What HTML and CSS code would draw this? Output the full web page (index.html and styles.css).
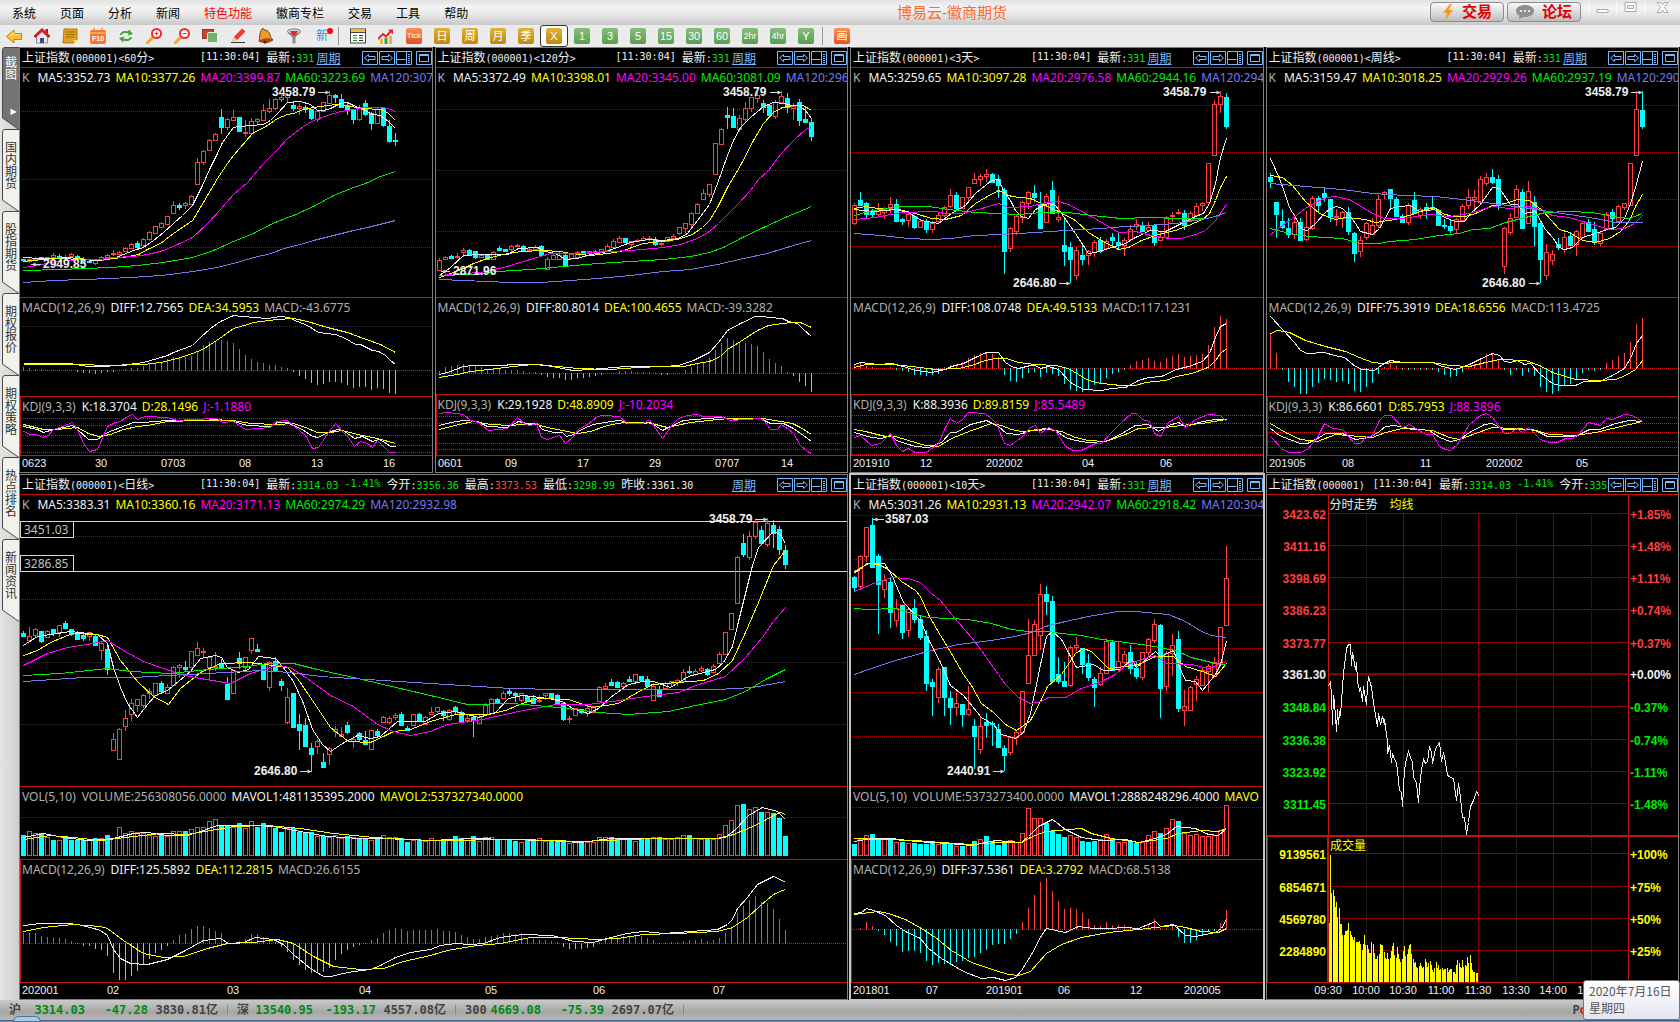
FILE: index.html
```html
<!DOCTYPE html>
<html lang="zh-CN">
<head>
<meta charset="utf-8">
<title>博易云-徽商期货</title>
<link rel="stylesheet" href="styles.css">
</head>
<body>
<svg class="sprite" aria-hidden="true">
  <symbol id="i-prev" viewBox="0 0 16 14"><path d="M.5 .5h15v13H.5z"/><path d="M2.500 7l4-3.500v2h6.500v3H6.500v2z"/></symbol>
  <symbol id="i-next" viewBox="0 0 16 14"><path d="M.5 .5h15v13H.5z"/><path d="M13.500 7l-4-3.500v2H3v3h6.500v2z"/></symbol>
  <symbol id="i-split" viewBox="0 0 16 14"><path d="M.5 .5h15v13H.5zM.5 8.500h9M10.500 1v12"/><path d="M12 3.500h3M12 5.500h3M12 7.500h3M12 9.500h3M12 11.500h3" stroke-dasharray="2 1"/></symbol>
  <symbol id="i-full" viewBox="0 0 16 14"><path d="M.5 .5h15v13H.5zM3.500 3.500h9v7h-9zM3.500 4.500h9"/></symbol>
  <symbol id="i-tab" viewBox="0 0 17 83"><path d="M17 .5H3Q.5 .5 .5 3V71L17 82.500" stroke="#4a4a4a"/></symbol>
</svg>

<header class="menubar">
  <nav class="menu">
    <button>系统</button><button>页面</button><button>分析</button><button>新闻</button><button class="hot">特色功能</button><button>徽商专栏</button><button>交易</button><button>工具</button><button>帮助</button>
  </nav>
  <h1 class="app-title">博易云-徽商期货</h1>
  <div class="menubar-end">
    <button class="cta"><svg width="12" height="16" viewBox="0 0 12 16"><path d="M8 0L1 9h4L3 16 11 6H6.500L10 0z" fill="#f59a1c"/></svg>交易</button>
    <button class="cta"><svg width="18" height="14" viewBox="0 0 18 14"><path d="M9 0c5 0 9 2.500 9 6s-4 6-9 6l-2 0-4 2 .5-3C1.500 10 0 8 0 6c0-3.500 4-6 9-6z" fill="#8f8f8f"/><g fill="#fff"><circle cx="5" cy="6" r="1"/><circle cx="9" cy="6" r="1"/><circle cx="13" cy="6" r="1"/></g></svg>论坛</button>
    <div class="win">
      <button aria-label="最小化"><svg width="13" height="12"><path d="M1 7.500h11v3H1z" fill="#fff" stroke="#aaa"/></svg></button>
      <button aria-label="最大化"><svg width="13" height="12"><path d="M1 .5h11v9H1z" fill="#fff" stroke="#aaa"/><path d="M3.500 3.500h6v3h-6z" fill="#eee" stroke="#aaa"/></svg></button>
      <button aria-label="关闭"><svg width="13" height="12"><path d="M1 .5h4l1.500 2.500L8 .5h4L8.500 5.500 12 10.500H8L6.500 8 5 10.500H1l3.500-5z" fill="#fff" stroke="#aaa"/></svg></button>
    </div>
  </div>
</header>

<div class="toolbar" role="toolbar">
  <button aria-label="后退"><svg class="ico" viewBox="0 0 16 16"><path d="M.5 8.500L8 2v3.500h7.500v6H8V15z" fill="#fbc02a" stroke="#b98200"/><path d="M3 8.300L7.300 4.500v2H14" fill="none" stroke="#ffe795"/></svg></button>
  <button aria-label="首页"><svg class="ico" viewBox="0 0 16 16"><path d="M2.500 8v7h11V8L8 3z" fill="#e8e8ee" stroke="#8a8f9c"/><path d="M11.500 1h2.500v5l-2.500-2.500z" fill="#a02020"/><path d="M8 .5L0 8l1.500 1.500L8 3.500l6.500 6L16 8z" fill="#cf1f2a" stroke="#cf1f2a"/><path d="M6 10h4v5H6z" fill="#35507c"/></svg></button>
  <button aria-label="记事"><svg class="ico" viewBox="0 0 16 16"><path d="M2 1h13v11l-3 3H1z" fill="#e0a020" stroke="#b47a08"/><path d="M4 4h9M4 6.500h9M4 9h8" stroke="#9c6a00"/><path d="M12 15v-3h3z" fill="#ffe9a0"/></svg></button>
  <button aria-label="F10"><svg class="ico" viewBox="0 0 16 16"><path d="M4 0v3M12 0v3" stroke="#c87828"/><rect y="2" width="16" height="14" rx="2" fill="#f6772c"/><path d="M0 5h16" stroke="#ffd38a"/><text x="8" y="13" class="ico-text">F10</text></svg></button>
  <button aria-label="刷新"><svg class="ico" viewBox="0 0 16 16"><path d="M2 7c0-3 4-5 8-3.500l1-2L15 6l-5 1.500.5-2C7 4.500 4.500 5 3.500 7z" fill="#3fa53a"/><path d="M14 9c0 3-4 5-8 3.500l-1 2L1 10l5-1.500-.5 2c3.500 1 6 .5 7-1.500z" fill="#3fa53a"/></svg></button>
  <button aria-label="放大"><svg class="ico" viewBox="0 0 16 16"><path d="M1 15l5-5" stroke="#f4a82a" stroke-width="3" stroke-linecap="round"/><circle cx="10.500" cy="5.500" r="4.500" fill="#fff" stroke="#ee2b2b" stroke-width="2"/><path d="M8.500 5.500h4M10.500 3.500v4" stroke="#ee2b2b"/></svg></button>
  <button aria-label="缩小"><svg class="ico" viewBox="0 0 16 16"><path d="M1 15l5-5" stroke="#f4a82a" stroke-width="3" stroke-linecap="round"/><circle cx="10.500" cy="5.500" r="4.500" fill="#fff" stroke="#ee2b2b" stroke-width="2"/><path d="M8.500 5.500h4" stroke="#ee2b2b"/></svg></button>
  <button aria-label="叠加"><svg class="ico" viewBox="0 0 16 16"><rect x=".5" y="1.500" width="11" height="9" fill="#c9423c" stroke="#96302c"/><rect x="5.500" y="4.500" width="10" height="10" rx="1" fill="#74b36c" stroke="#e8f2e6"/></svg></button>
  <button aria-label="画线"><svg class="ico" viewBox="0 0 16 16"><path d="M1 14.500h14" stroke="#333"/><path d="M2.500 13L4 9l8-8.500 3.500 3L7 12z" fill="#ea3a2c"/><path d="M2.500 13L4 9l3 3z" fill="#ffc9a8"/></svg></button>
  <button aria-label="预警"><svg class="ico" viewBox="0 0 16 16"><path d="M4 1c1-1.500 2 0 2 1 5 0 6 4 6.500 7L15 12 1 13.500C2 10 1 5 4 1z" fill="#ec9a28" stroke="#7a3a10"/><path d="M1 13c3-3 10-4 14-1-2 3-10 5-14 1z" fill="#a84a18"/><circle cx="7" cy="14" r="1.500" fill="#5a2508"/></svg></button>
  <button aria-label="选股"><svg class="ico" viewBox="0 0 16 16"><path d="M1.500 3c0 3 4 4 5 7v5.500h3V10c1-3 5-4 5-7z" fill="#8a8a90"/><ellipse cx="8" cy="3.500" rx="6.500" ry="2.500" fill="#d8d8dc" stroke="#777"/><path d="M4.500 3.500h7L8 8z" fill="#e8252c" stroke="#e8252c"/></svg></button>
  <button class="new">新</button>
  <i class="sep"></i>
  <button aria-label="报价"><svg class="ico" viewBox="0 0 16 16"><rect x=".5" y="1" width="15" height="14" fill="#fff" stroke="#444"/><path d="M1 1.500h14v3H1z" fill="#f5c231"/><path d="M1 4.500h14" stroke="#444"/><path d="M3 7.500h4M3 10h4M3 12.500h4" stroke="#208a2a"/><path d="M9 7.500h4M9 10h4M9 12.500h4" stroke="#333"/></svg></button>
  <button aria-label="走势"><svg class="ico" viewBox="0 0 16 16"><path d="M2 11h3v5H2zM11 8h3v8h-3z" fill="#f2b430"/><path d="M6.500 10h3v6h-3z" fill="#3fa53a"/><path d="M0 11l5-5 3 2.500L13 3" fill="none" stroke="#e8252c" stroke-width="2"/><path d="M10 1.500h5v5z" fill="#e8252c"/></svg></button>
  <button class="key tick"><span>Tick</span></button>
  <button class="key gold"><span>日</span></button>
  <button class="key gold"><span>周</span></button>
  <button class="key gold"><span>月</span></button>
  <button class="key gold"><span>季</span></button>
  <button class="key gold on" aria-pressed="true"><span>X</span></button>
  <button class="key green"><span>1</span></button>
  <button class="key green"><span>3</span></button>
  <button class="key green"><span>5</span></button>
  <button class="key green"><span>15</span></button>
  <button class="key green"><span>30</span></button>
  <button class="key green"><span>60</span></button>
  <button class="key green small"><span>2hr</span></button>
  <button class="key green small"><span>4hr</span></button>
  <button class="key green"><span>Y</span></button>
  <i class="sep"></i>
  <button class="key tick"><span>画</span></button>
</div>

<div class="workspace">
  <nav class="tabs">
    <button class="on"><svg><use href="#i-tab"/></svg><span>截图</span><i>▶</i></button>
    <button><svg><use href="#i-tab"/></svg><span>国内期货</span></button>
    <button><svg><use href="#i-tab"/></svg><span>股指期货</span></button>
    <button><svg><use href="#i-tab"/></svg><span>期权报价</span></button>
    <button><svg><use href="#i-tab"/></svg><span>期权策略</span></button>
    <button><svg><use href="#i-tab"/></svg><span>热点排名</span></button>
    <button><svg><use href="#i-tab"/></svg><span>新闻资讯</span></button>
  </nav>

  <main class="board">
    <section class="panel three" id="m60">
      <header class="bar"><h2><b>上证指数</b>(000001)&lt;60<b>分</b>&gt;</h2>
        <p class="quotes"><span>[11:30:04]</span><span><b>最新</b>:<em class="dn">331</em></span></p>
        <a class="period" href="#m60">周期</a>
        <div class="tools"><button aria-label="前"><svg><use href="#i-prev"/></svg></button><button aria-label="后"><svg><use href="#i-next"/></svg></button><button aria-label="分割"><svg><use href="#i-split"/></svg></button><button aria-label="放大"><svg><use href="#i-full"/></svg></button></div></header>
      <div class="pane"><svg class="plot" role="img" aria-label="K线"></svg><p class="legend"><span class="g k">K</span><span>MA5:3352.73</span><span class="y">MA10:3377.26</span><span class="m">MA20:3399.87</span><span class="n">MA60:3223.69</span><span class="b">MA120:307</span></p></div>
      <div class="pane"><svg class="plot" role="img" aria-label="MACD"></svg><p class="legend"><span class="g">MACD(12,26,9)</span><span>DIFF:12.7565</span><span class="y">DEA:34.5953</span><span class="g">MACD:-43.6775</span></p></div>
      <div class="pane last"><svg class="plot" role="img" aria-label="KDJ"></svg><p class="legend"><span class="g">KDJ(9,3,3)</span><span>K:18.3704</span><span class="y">D:28.1496</span><span class="m">J:-1.1880</span></p></div>
      <svg class="axis"></svg>
    </section>

    <section class="panel three alt" id="m120">
      <header class="bar"><h2><b>上证指数</b>(000001)&lt;120<b>分</b>&gt;</h2>
        <p class="quotes"><span>[11:30:04]</span><span><b>最新</b>:<em class="dn">331</em></span></p>
        <a class="period" href="#m120">周期</a>
        <div class="tools"><button aria-label="前"><svg><use href="#i-prev"/></svg></button><button aria-label="后"><svg><use href="#i-next"/></svg></button><button aria-label="分割"><svg><use href="#i-split"/></svg></button><button aria-label="放大"><svg><use href="#i-full"/></svg></button></div></header>
      <div class="pane"><svg class="plot" role="img" aria-label="K线"></svg><p class="legend"><span class="g k">K</span><span>MA5:3372.49</span><span class="y">MA10:3398.01</span><span class="m">MA20:3345.00</span><span class="n">MA60:3081.09</span><span class="b">MA120:296</span></p></div>
      <div class="pane"><svg class="plot" role="img" aria-label="MACD"></svg><p class="legend"><span class="g">MACD(12,26,9)</span><span>DIFF:80.8014</span><span class="y">DEA:100.4655</span><span class="g">MACD:-39.3282</span></p></div>
      <div class="pane last"><svg class="plot" role="img" aria-label="KDJ"></svg><p class="legend"><span class="g">KDJ(9,3,3)</span><span>K:29.1928</span><span class="y">D:48.8909</span><span class="m">J:-10.2034</span></p></div>
      <svg class="axis"></svg>
    </section>

    <section class="panel three alt" id="d3">
      <header class="bar"><h2><b>上证指数</b>(000001)&lt;3<b>天</b>&gt;</h2>
        <p class="quotes"><span>[11:30:04]</span><span><b>最新</b>:<em class="dn">331</em></span></p>
        <a class="period" href="#d3">周期</a>
        <div class="tools"><button aria-label="前"><svg><use href="#i-prev"/></svg></button><button aria-label="后"><svg><use href="#i-next"/></svg></button><button aria-label="分割"><svg><use href="#i-split"/></svg></button><button aria-label="放大"><svg><use href="#i-full"/></svg></button></div></header>
      <div class="pane"><svg class="plot" role="img" aria-label="K线"></svg><p class="legend"><span class="g k">K</span><span>MA5:3259.65</span><span class="y">MA10:3097.28</span><span class="m">MA20:2976.58</span><span class="n">MA60:2944.16</span><span class="b">MA120:294</span></p></div>
      <div class="pane"><svg class="plot" role="img" aria-label="MACD"></svg><p class="legend"><span class="g">MACD(12,26,9)</span><span>DIFF:108.0748</span><span class="y">DEA:49.5133</span><span class="g">MACD:117.1231</span></p></div>
      <div class="pane last"><svg class="plot" role="img" aria-label="KDJ"></svg><p class="legend"><span class="g">KDJ(9,3,3)</span><span>K:88.3936</span><span class="y">D:89.8159</span><span class="m">J:85.5489</span></p></div>
      <svg class="axis"></svg>
    </section>

    <section class="panel three" id="week">
      <header class="bar"><h2><b>上证指数</b>(000001)&lt;<b>周线</b>&gt;</h2>
        <p class="quotes"><span>[11:30:04]</span><span><b>最新</b>:<em class="dn">331</em></span></p>
        <a class="period" href="#week">周期</a>
        <div class="tools"><button aria-label="前"><svg><use href="#i-prev"/></svg></button><button aria-label="后"><svg><use href="#i-next"/></svg></button><button aria-label="分割"><svg><use href="#i-split"/></svg></button><button aria-label="放大"><svg><use href="#i-full"/></svg></button></div></header>
      <div class="pane"><svg class="plot" role="img" aria-label="K线"></svg><p class="legend"><span class="g k">K</span><span>MA5:3159.47</span><span class="y">MA10:3018.25</span><span class="m">MA20:2929.26</span><span class="n">MA60:2937.19</span><span class="b">MA120:290</span></p></div>
      <div class="pane"><svg class="plot" role="img" aria-label="MACD"></svg><p class="legend"><span class="g">MACD(12,26,9)</span><span>DIFF:75.3919</span><span class="y">DEA:18.6556</span><span class="g">MACD:113.4725</span></p></div>
      <div class="pane last"><svg class="plot" role="img" aria-label="KDJ"></svg><p class="legend"><span class="g">KDJ(9,3,3)</span><span>K:86.6601</span><span class="y">D:85.7953</span><span class="m">J:88.3896</span></p></div>
      <svg class="axis"></svg>
    </section>

    <section class="panel vol wide" id="day">
      <header class="bar"><h2><b>上证指数</b>(000001)&lt;<b>日线</b>&gt;</h2>
        <p class="quotes"><span>[11:30:04]</span><span><b>最新</b>:<em class="dn">3314.03</em></span><span class="dn">-1.41%</span><span><b>今开</b>:<em class="dn">3356.36</em></span><span><b>最高</b>:<em class="up">3373.53</em></span><span><b>最低</b>:<em class="dn">3298.99</em></span><span><b>昨收</b>:3361.30</span></p>
        <a class="period" href="#day">周期</a>
        <div class="tools"><button aria-label="前"><svg><use href="#i-prev"/></svg></button><button aria-label="后"><svg><use href="#i-next"/></svg></button><button aria-label="分割"><svg><use href="#i-split"/></svg></button><button aria-label="放大"><svg><use href="#i-full"/></svg></button></div></header>
      <div class="pane"><svg class="plot" role="img" aria-label="K线"></svg><p class="legend"><span class="g k">K</span><span>MA5:3383.31</span><span class="y">MA10:3360.16</span><span class="m">MA20:3171.13</span><span class="n">MA60:2974.29</span><span class="b">MA120:2932.98</span></p></div>
      <div class="pane"><svg class="plot" role="img" aria-label="成交量"></svg><p class="legend"><span class="g">VOL(5,10)</span><span class="g">VOLUME:256308056.0000</span><span>MAVOL1:481135395.2000</span><span class="y">MAVOL2:537327340.0000</span></p></div>
      <div class="pane last"><svg class="plot" role="img" aria-label="MACD"></svg><p class="legend"><span class="g">MACD(12,26,9)</span><span>DIFF:125.5892</span><span class="y">DEA:112.2815</span><span class="g">MACD:26.6155</span></p></div>
      <svg class="axis"></svg>
    </section>

    <section class="panel vol active" id="d10">
      <header class="bar"><h2><b>上证指数</b>(000001)&lt;10<b>天</b>&gt;</h2>
        <p class="quotes"><span>[11:30:04]</span><span><b>最新</b>:<em class="dn">331</em></span></p>
        <a class="period" href="#d10">周期</a>
        <div class="tools"><button aria-label="前"><svg><use href="#i-prev"/></svg></button><button aria-label="后"><svg><use href="#i-next"/></svg></button><button aria-label="分割"><svg><use href="#i-split"/></svg></button><button aria-label="放大"><svg><use href="#i-full"/></svg></button></div></header>
      <div class="pane"><svg class="plot" role="img" aria-label="K线"></svg><p class="legend"><span class="g k">K</span><span>MA5:3031.26</span><span class="y">MA10:2931.13</span><span class="m">MA20:2942.07</span><span class="n">MA60:2918.42</span><span class="b">MA120:304</span></p></div>
      <div class="pane"><svg class="plot" role="img" aria-label="成交量"></svg><p class="legend"><span class="g">VOL(5,10)</span><span class="g">VOLUME:5373273400.0000</span><span>MAVOL1:2888248296.4000</span><span class="y">MAVO</span></p></div>
      <div class="pane last"><svg class="plot" role="img" aria-label="MACD"></svg><p class="legend"><span class="g">MACD(12,26,9)</span><span>DIFF:37.5361</span><span class="y">DEA:3.2792</span><span class="g">MACD:68.5138</span></p></div>
      <svg class="axis"></svg>
    </section>

    <section class="panel intraday" id="today">
      <header class="bar"><h2><b>上证指数</b>(000001)</h2>
        <p class="quotes"><span>[11:30:04]</span><span><b>最新</b>:<em class="dn">3314.03</em></span><span class="dn">-1.41%</span><span><b>今开</b>:<em class="dn">335</em></span></p>
        <div class="tools"><button aria-label="前"><svg><use href="#i-prev"/></svg></button><button aria-label="后"><svg><use href="#i-next"/></svg></button><button aria-label="分割"><svg><use href="#i-split"/></svg></button><button aria-label="放大"><svg><use href="#i-full"/></svg></button></div></header>
      <div class="pane"><svg class="plot" role="img" aria-label="分时走势"></svg><p class="legend"><span>分时走势</span><span class="y">均线</span></p></div>
      <svg class="axis"></svg>
    </section>
  </main>
</div>

<footer class="status">
  <div class="index"><span><b>沪</b><b class="dn">3314.03</b></span><b class="dn">-47.28</b><b>3830.81亿</b></div>
  <div class="index"><span><b>深</b><b class="dn">13540.95</b></span><b class="dn">-193.17</b><b>4557.08亿</b></div>
  <div class="index"><span><b>300</b><b class="dn">4669.08</b></span><b class="dn">-75.39</b><b>2697.07亿</b></div>
  <b class="brand">P<em>o</em></b>
</footer>
<div class="taskbar"><span class="orb"></span></div>
<div class="datetip" role="tooltip">2020年7月16日<br>星期四</div>
<script src="charts.js"></script>
</body>
</html>
```
FILE: styles.css
```css
* { box-sizing: border-box; }
body {
  margin: 0;
  height: 100vh;
  display: flex;
  flex-direction: column;
  overflow: hidden;
  background: #ebebeb;
  color: #000;
  font: 12px/16px "Liberation Sans", "Noto Sans CJK SC", sans-serif;
}
button { padding: 0; border: 0; background: none; color: inherit; font: inherit; }
h1, h2, p { margin: 0; font: inherit; }
em { font-style: normal; }
.sprite { position: absolute; width: 0; height: 0; }

/* menu bar */
.menubar {
  flex: none;
  height: 25px;
  display: grid;
  grid-template-columns: 1fr auto 1fr;
  align-items: center;
  background: linear-gradient(#e2e2e2, #f4f4f4 30%, #e6e6e6 60%, #c8c8c8);
}
.menu { display: flex; gap: 24px; padding: 2px 0 0 12px; }
.hot { color: #f00; }
.app-title { color: #ff6a2a; font-size: 15px; padding-left: 224px; }
.menubar-end { display: flex; justify-content: flex-end; align-items: flex-start; gap: 3px; height: 25px; padding-top: 2px; }
.cta {
  display: flex; align-items: center; justify-content: center; gap: 8px;
  width: 74px; height: 20px;
  border: 1px solid #8c8c8c; border-radius: 4px;
  background: linear-gradient(#fafafa, #dcdcdc 50%, #bdbdbd);
  color: #e00000; font-size: 15px; line-height: 18px; font-weight: bold;
}
.win { display: flex; margin-left: 4px; }
.win button { width: 28px; height: 12px; border-left: 1px solid #fff; display: flex; justify-content: center; }
.win button:last-child { width: 36px; }

/* toolbar */
.toolbar { flex: none; height: 22px; display: flex; align-items: center; background: #ebebeb; }
.toolbar button { width: 28px; height: 22px; display: flex; align-items: center; justify-content: center; }
.ico { width: 16px; height: 16px; }
.ico-text { font: bold 7px "Liberation Sans", sans-serif; fill: #fff; text-anchor: middle; }
.sep { width: 8px; height: 18px; border-left: 1px solid #999; margin-left: 2px; margin-right: -2px; }
.toolbar .new { position: relative; color: #2f8ee8; }
.new::after { content: ""; position: absolute; right: 3px; top: 3px; width: 6px; height: 6px; border-radius: 3px; background: #f00; }
.key span {
  width: 16px; height: 16px; border-radius: 2px;
  color: #fff; font-size: 11px; line-height: 16px; text-align: center;
}
.gold span { background: linear-gradient(#e0b23c, #c08808); }
.green span { background: linear-gradient(#86bf7c, #5a9c50); }
.tick span { background: linear-gradient(#f5925c, #e2501c); font-size: 8px; }
.key.tick:last-child span { font-size: 11px; }
.key.small span { font-size: 9px; }
.toolbar .on { background: #fff; border: 1px solid #333; border-radius: 3px; }

/* side tabs */
.workspace { flex: 1; min-height: 0; display: flex; }
.tabs { flex: none; width: 19px; padding-left: 2px; background: linear-gradient(90deg, #e4e4e4, #cfcfcf); }
.tabs button { display: grid; align-content: start; width: 17px; height: 82px; padding: 0; color: #333; }
.tabs button > * { grid-area: 1 / 1; }
.tabs svg { width: 17px; height: 83px; fill: #f2f2ec; }
.tabs span { width: 12px; margin: 13px 0 0 3px; font-size: 12px; line-height: 12px; word-break: break-all; }
.tabs .on { color: #fff; }
.tabs .on svg { fill: #747474; }
.tabs .on span { margin-top: 10px; }
.tabs i { align-self: start; margin: 58px 0 0 6px; font: 8px/14px "DejaVu Sans", sans-serif; }

/* chart board */
.board {
  flex: 1; min-width: 0;
  display: grid;
  grid-template-columns: repeat(4, minmax(0, 1fr));
  grid-template-rows: minmax(0, 426fr) minmax(0, 526fr);
  gap: 1px 2px;
  padding-right: 1px;
  background: #000;
}
.panel { display: grid; grid-template-columns: minmax(0, 1fr); border: 1px solid #808080; background: #000; color: #f0f0f0; min-height: 0; }
.three { grid-template-rows: 19px minmax(0, 230fr) minmax(0, 99fr) minmax(0, 59fr) 17px; }
.three.alt { grid-template-rows: 19px minmax(0, 230fr) minmax(0, 97fr) minmax(0, 61fr) 17px; }
.vol { grid-template-rows: 19px minmax(0, 292fr) minmax(0, 73fr) minmax(0, 123fr) 17px; }
.intraday { grid-template-rows: 19px minmax(0, 488fr) 17px; }
.wide { grid-column: span 2; }
.active { outline: 1px solid #c8c4c0; border-color: #c8c4c0; }

.bar { display: flex; align-items: center; padding-left: 2px; font: 10px/18px "DejaVu Sans Mono", "Noto Sans CJK SC", monospace; white-space: nowrap; }
.bar b { font: 12px/18px "Noto Sans CJK SC", sans-serif; }
.bar h2 { width: 178px; }
.quotes { flex: 1; min-width: 0; display: flex; gap: 6px; overflow: hidden; }
.period { flex: none; width: 45px; color: #78b8ff; font: 12px/16px "Noto Sans CJK SC", sans-serif; text-decoration: underline; }
.intraday .bar h2 { width: auto; margin-right: 8px; }
.tools { flex: none; display: flex; gap: 1px; width: 70px; }
.tools button { width: 16px; height: 14px; }
.tools button:last-child { margin-left: 3px; }
.tools svg { display: block; width: 16px; height: 14px; fill: none; stroke: #7ab8ff; background: #000; }
.up { color: #ff4040; }
.dn { color: #00e600; }

.pane { display: grid; grid-template: minmax(0, 1fr) / minmax(0, 1fr); border-top: 1px solid #c41408; overflow: hidden; }
.pane > * { grid-area: 1 / 1; }
.plot, .axis { display: block; width: 100%; height: 100%; overflow: hidden; }
.axis { border-top: 1px solid #c41408; }
.last { box-shadow: inset 1px 0 #c41408; }
.legend { display: flex; gap: 5px; align-self: start; padding-left: 2px; font: 12px/20px "Noto Sans", "Noto Sans CJK SC", sans-serif; white-space: nowrap; overflow: hidden; }
.legend .g:first-child { margin-right: 1px; }
.legend .k:first-child { margin-right: 3px; }
.intraday .legend { padding-left: 63px; gap: 12px; }
.g { color: #b0b0b0; }
.y { color: #ff0; }
.m { color: #f0f; }
.n { color: #0e0; }
.b { color: #7878f0; }

/* svg marks */
.plot line, .plot rect, .plot polyline { shape-rendering: crispEdges; }
.plot polyline { fill: none; }
.grid { stroke: #a00808; stroke-dasharray: 1 1; }
.grid-hot { stroke: #d01818; stroke-dasharray: 1 1; }
.grid-solid { stroke: #800; }
.frame { stroke: #c41408; fill: none; }
.s-w { stroke: #f0f0f0; }
.s-y { stroke: #ff0; }
.s-m { stroke: #f0f; }
.s-n { stroke: #0e0; }
.s-b { stroke: #7878f0; }
.s-up { stroke: #ff4040; fill: none; }
.s-dn { stroke: #0ff; fill: #0ff; }
.s-box { stroke: #d8d8d8; fill: #000; }
.s-line { stroke: #d8d8d8; }
.vbar { fill: #ff0; }
.plot text { font: bold 12px "Liberation Sans", sans-serif; fill: #f0f0f0; }
.plot .box-text { font: 12px "Noto Sans", sans-serif; fill: #c0c0c0; }
.plot .t-up { fill: #ff4040; }
.plot .t-dn { fill: #0e0; }
.plot .t-y { fill: #ff0; }
.plot .t-zh { font: 12px "Noto Sans CJK SC", sans-serif; fill: #ff0; }
.plot .end { text-anchor: end; }
.axis text { font: 11px "Liberation Sans", sans-serif; fill: #f0f0f0; }
.axis .mid { text-anchor: middle; }

/* status bar */
.status {
  flex: none; height: 20px;
  display: flex; align-items: center; padding-left: 9px;
  background: linear-gradient(#cacaca, #a6a6a6 60%, #b8b8b8);
  color: #444;
  font: 12px/20px "DejaVu Sans Mono", "Noto Sans CJK SC", monospace;
  white-space: nowrap;
}
.status .dn { color: #008a10; }
.index { display: grid; grid-template-columns: 76px 63px 70px; padding-right: 19px; text-align: right; position: relative; }
.index span { display: flex; justify-content: space-between; }
.index::after { content: ""; position: absolute; right: 9px; top: 5px; width: 1px; height: 10px; background: #888; }
.brand { margin-left: auto; margin-right: 93px; }
.brand em { color: #e01010; }
.taskbar { flex: none; height: 2px; background: #6e93b5; border-top: 1px solid #46627e; }
.orb { position: absolute; left: 13px; bottom: 0; width: 28px; height: 6px; border-radius: 14px 14px 0 0; background: #a9cbe6; border: 1px solid #4d7597; }
.datetip {
  position: absolute; right: 0; bottom: 2px; width: 97px; height: 40px;
  padding: 1px 5px;
  border: 1px solid #767676; border-radius: 3px;
  background: linear-gradient(#fff, #e4e5f0);
  color: #575757; font: 12px/17px "Noto Sans CJK SC", sans-serif; white-space: nowrap;
}
```
FILE: charts.js
```js
// Every pane carries its own vertical range; values are mapped onto the pane height.
// Horizontal values use three units per pixel, and candles sit 6px apart.
const NS = 'http://www.w3.org/2000/svg';

function add(parent, name, attrs, text) {
  const node = document.createElementNS(NS, name);
  for (const key in attrs) node.setAttribute(key, attrs[key]);
  if (text !== undefined) node.textContent = text;
  parent.appendChild(node);
  return node;
}
const hline = (svg, y, cls, x1 = 1, x2 = '100%') => add(svg, 'line', { x1, x2, y1: y + .5, y2: y + .5, class: cls });
const vline = (svg, x, y1, y2, cls) => add(svg, 'line', { x1: x + .5, x2: x + .5, y1, y2, class: cls });

function parseCandles(text) {
  return text.trim().split(/\s*;\s*/).map(row => {
    const [kind, high, top, bottom, low] = row.split(' ');
    return { up: kind === 'r', high: +high, top: +top, bottom: +bottom, low: +low };
  });
}

const centre = i => 3 + 6 * i;

function drawPane(svg, pane, left, candles) {
  svg.replaceChildren();
  const [from, to] = pane.range;
  const height = svg.clientHeight;
  const Y = v => Math.round((v - from) * height / (to - from));
  const X = v => Math.round((v - left) / 3);

  (pane.grid || []).forEach(v => hline(svg, Y(v), 'grid'));
  (pane.hot || []).forEach(v => hline(svg, Y(v), 'grid-hot'));
  (pane.levels || []).forEach(([v, label, boxTop]) => {
    hline(svg, Y(v), 's-line', 0);
    add(svg, 'rect', { x: .5, y: Y(boxTop) + .5, width: 53, height: 16, class: 's-box' });
    add(svg, 'text', { x: 4, y: Y(boxTop) + 13, class: 'box-text' }, label);
  });
  if (pane.candles) candles.forEach((c, i) => {
    const x = centre(i), cls = c.up ? 's-up' : 's-dn';
    const top = Y(c.top), bottom = Math.max(Y(c.bottom), top + 1);
    if (Y(c.high) < top) vline(svg, x, Y(c.high), top, cls);
    if (Y(c.low) > bottom) vline(svg, x, bottom, Y(c.low), cls);
    add(svg, 'rect', { x: x - 1.5, y: top + .5, width: 4, height: bottom - top, class: cls });
  });
  if (pane.volumes) pane.volumes.forEach((v, i) => {
    const up = candles[i].up;
    add(svg, 'rect', { x: centre(i) - 1.5, y: Y(v) + .5, width: 4, height: Y(pane.base) - Y(v) - 1, class: up ? 's-up' : 's-dn' });
  });
  if (pane.bars) pane.bars.forEach((v, i) => {
    if (v === pane.zero) return;
    vline(svg, centre(i), Y(Math.min(v, pane.zero)), Y(Math.max(v, pane.zero)) + 1, v < pane.zero ? 's-up' : 's-dn');
  });
  (pane.lines || []).forEach(([cls, text]) => {
    const points = text.split(' ').map(p => { const [x, v] = p.split(','); return (X(x) + .5) + ',' + (Y(v) + .5); });
    add(svg, 'polyline', { points: points.join(' '), class: 's-' + cls });
  });
  (pane.marks || []).forEach(([label, x, v, tail, tip]) => {
    const y = Y(v), dir = tip > tail ? 1 : -1, tx = X(tip);
    add(svg, 'text', { x: X(x), y: y + 4 }, label);
    add(svg, 'line', { x1: X(tail), x2: tx, y1: y + .5, y2: y + .5, class: 's-line' });
    add(svg, 'path', { d: `M${tx + .5} ${y + .5}l${-4 * dir} -2v4z`, fill: '#d8d8d8' });
  });
}

const charts = {
  m60: {
    left: 60, axis: [['0623', 66], ['30', 284], ['0703', 482], ['08', 716], ['13', 932], ['16', 1149]],
    candles: 'c 626 627 630 630;r 622 628 634 640;r 622 624 628 630;c 620 622 628 628;r 620 622 626 628;r 608 616 622 626;c 611 618 622 624;r 615 620 624 624;r 608 613 618 620;c 616 617 625 628;c 622 626 632 636;c 630 632 636 638;r 628 630 638 644;r 618 620 630 630;r 612 615 622 626;r 600 608 613 618;r 604 606 612 618;r 592 595 604 606;r 580 581 594 598;c 574 580 590 598;r 563 566 586 590;r 542 547 568 572;r 527 529 548 550;r 515 520 530 530;r 498 499 521 521;r 453 466 488 490;c 459 464 470 480;r 456 460 466 476;r 436 437 461 466;r 323 337 401 401;r 300 302 337 345;r 267 271 301 301;r 248 253 271 272;c 178 200 230 252;r 203 208 230 240;r 180 202 210 210;c 200 202 242 242;r 210 245 248 262;r 205 213 248 252;r 203 208 214 226;r 161 181 209 210;r 147 174 182 188;r 144 146 175 180;r 135 141 147 155;r 130 134 142 155;c 152 165 175 182;r 160 168 174 196;c 166 170 178 190;c 176 178 204 210;r 182 184 206 216;r 155 157 184 186;r 124 136 158 160;c 132 135 141 158;c 133 147 171 174;c 155 165 180 194;c 176 179 207 222;r 165 172 206 212;c 150 159 191 197;c 187 189 218 240;r 172 176 218 222;c 170 174 226 230;c 210 227 273 280;c 250 270 273 288',
    panes: [
      { range: [54, 741], candles: true, grid: [184, 388, 592],
        lines: [
          ['w', '70,622 120,623 180,624 240,626 290,630 340,624 400,601 430,592 460,570 490,545 520,518 545,495 560,480 575,466 590,435 605,405 630,350 650,310 665,277 700,232 715,228 790,223 810,210 830,190 862,156 900,152 930,162 950,181 970,181 990,174 1020,158 1040,157 1060,165 1090,176 1115,193 1140,195 1165,213 1186,233'],
          ['y', '70,634 130,626 200,622 260,626 300,626 370,621 415,613 440,598 480,578 520,550 575,509 600,470 620,435 650,385 680,340 700,316 755,248 800,225 830,205 860,191 880,188 910,176 940,170 1005,161 1050,168 1090,173 1140,178 1160,187 1186,209'],
          ['m', '70,650 110,644 150,635 200,630 240,628 300,628 340,622 400,619 440,613 490,600 530,583 575,562 620,520 660,476 700,433 740,395 790,340 830,298 862,265 910,227 940,210 980,196 1020,184 1060,178 1090,172 1150,171 1170,177 1186,184'],
          ['n', '70,661 180,656 250,653 330,650 410,645 490,637 575,622 640,600 700,574 760,548 810,522 860,500 880,494 940,469 1000,436 1060,410 1095,400 1140,378 1186,364'],
          ['b', '70,696 160,690 250,687 330,684 440,679 510,672 575,664 650,652 720,632 760,620 800,611 860,592 900,582 940,570 1000,556 1060,540 1100,530 1186,511']],
        marks: [['3458.79', 815, 125, 955, 988], ['2949.85', 128, 643, 122, 92]] },
      { range: [744, 1038], zero: 961, grid: [829], hot: [961],
        bars: [950,954,956,957,959,960,960,960,960,963,966,967,969,967,963,962,959,956,953,953,949,942,938,935,927,922,921,921,918,905,886,877,872,870,873,878,898,915,927,936,939,944,946,951,954,963,975,984,995,1001,998,994,992,997,1002,1011,1008,1008,1016,1010,1014,1025,1029],
        lines: [
          ['w', '70,940 210,940 260,947 310,949 350,946 410,940 430,935 470,925 500,914 520,905 575,886 600,862 630,835 660,812 700,794 725,798 800,803 840,799 865,801 890,813 920,826 955,845 1005,852 1035,864 1065,881 1080,883 1115,900 1135,904 1155,914 1170,929 1186,941'],
          ['y', '70,943 230,941 330,946 430,943 480,936 530,923 575,908 605,898 640,875 665,858 700,835 740,821 760,816 830,808 880,804 920,812 980,830 1040,846 1090,864 1140,883 1186,905']] },
      { range: [1041, 1215], hot: [1105, 1126, 1156, 1186, 1207],
        lines: [
          ['w', '70,1127 110,1136 130,1145 160,1138 190,1132 215,1126 230,1138 265,1168 290,1168 320,1146 360,1132 400,1117 430,1115 500,1109 545,1110 600,1109 650,1107 700,1112 740,1125 810,1127 830,1116 862,1116 885,1127 905,1137 935,1158 955,1161 980,1147 1010,1136 1030,1140 1062,1165 1085,1159 1115,1174 1135,1166 1150,1173 1170,1187 1186,1189'],
          ['y', '70,1121 130,1137 170,1137 230,1131 265,1150 295,1158 330,1152 370,1137 410,1129 440,1124 500,1114 600,1109 700,1111 750,1118 830,1122 880,1120 915,1131 950,1147 990,1145 1025,1141 1070,1153 1130,1165 1186,1178'],
          ['m', '70,1142 90,1153 110,1153 125,1162 145,1155 160,1138 185,1128 215,1115 235,1142 250,1180 268,1203 290,1197 322,1128 345,1115 360,1113 380,1097 395,1093 410,1108 435,1099 500,1102 530,1110 570,1108 650,1105 665,1115 700,1113 735,1137 775,1135 810,1130 825,1112 862,1109 880,1125 915,1155 935,1195 955,1192 985,1145 1005,1120 1025,1142 1045,1160 1062,1189 1080,1174 1100,1180 1115,1192 1132,1169 1150,1187 1168,1207 1186,1207']] }
    ]
  },
  m120: {
    left: 18, axis: [['0601', 24], ['09', 224], ['17', 441], ['29', 656], ['0707', 854], ['14', 1053]],
    candles: 'r 625 629 661 661;r 618 620 628 628;c 615 619 624 626;r 609 617 622 625;r 593 601 607 622;c 597 600 615 615;c 602 604 621 627;r 612 616 620 620;c 612 614 627 628;r 604 607 626 626;c 588 595 600 602;c 596 598 602 606;r 584 587 598 606;r 581 584 588 592;c 586 589 600 602;r 594 596 600 603;r 585 590 597 602;c 586 589 616 622;r 620 626 656 658;r 611 616 626 628;r 607 615 628 628;c 612 615 646 646;r 610 612 624 624;r 602 605 620 620;c 602 604 609 614;r 602 604 608 612;r 600 602 606 610;r 596 598 602 606;r 582 588 600 602;r 567 573 590 592;r 558 565 575 580;c 563 565 575 580;r 572 574 582 590;r 566 569 573 576;r 558 565 570 572;r 558 564 568 572;c 562 566 582 588;r 572 578 582 587;r 560 562 574 576;r 552 557 564 566;r 530 532 550 556;r 518 520 534 548;r 486 488 521 530;r 459 461 488 488;r 418 430 448 450;r 402 403 431 440;r 278 280 371 371;r 235 238 281 281;c 170 195 200 237;c 173 198 230 232;r 196 205 238 246;r 156 175 206 220;r 140 142 175 185;r 122 136 143 160;c 150 158 170 190;c 162 166 195 203;r 150 155 198 208;r 124 138 155 158;c 128 144 172 190;r 160 168 174 210;c 148 156 210 228;c 168 207 215 220;c 205 216 258 273',
    panes: [
      { range: [54, 741], candles: true, grid: [178, 361, 544],
        lines: [
          ['w', '28,676 60,650 100,616 150,613 230,611 265,595 320,590 345,602 375,608 405,626 440,623 480,612 520,606 560,592 600,576 650,568 700,570 745,564 770,550 800,510 838,461 860,400 890,315 910,270 930,230 960,200 1000,167 1030,157 1060,158 1085,164 1105,165 1125,180 1144,203'],
          ['y', '28,680 60,670 100,655 130,640 180,620 220,612 270,604 340,600 390,602 420,609 480,614 530,610 570,602 640,578 690,572 740,568 785,553 815,530 838,511 860,470 890,412 930,345 970,270 1000,220 1030,186 1055,172 1090,164 1120,166 1144,179'],
          ['m', '28,675 100,668 150,665 220,652 280,634 330,618 360,610 440,609 540,604 600,600 700,591 750,583 800,565 838,543 865,520 890,492 920,462 960,420 985,388 1015,360 1050,312 1090,270 1125,238 1144,230'],
          ['n', '28,676 120,671 200,664 300,656 400,647 500,640 600,634 700,627 780,618 838,607 880,590 930,565 1000,532 1070,498 1100,485 1144,469'],
          ['b', '28,688 100,691 240,696 330,695 420,691 500,683 600,674 700,662 780,656 860,643 940,625 1010,608 1060,593 1110,580 1144,571']],
        marks: [['3458.79', 880, 125, 1020, 1053], ['2871.96', 68, 662, 60, 34]] },
      { range: [744, 1032], zero: 970, hot: [970],
        bars: [962,951,948,945,942,945,948,952,957,957,958,960,960,960,962,965,966,972,977,981,981,986,987,981,981,977,975,972,970,968,963,962,964,966,965,966,969,972,971,969,968,961,951,941,935,925,900,880,864,870,875,879,882,888,906,927,939,948,966,975,993,1005,1023],
        lines: [
          ['w', '28,972 60,962 100,949 130,946 200,946 260,941 330,943 380,951 410,958 430,961 480,958 550,952 590,948 640,947 700,949 745,946 790,931 838,907 865,875 892,841 930,820 975,799 1000,797 1015,802 1055,804 1075,812 1100,820 1120,837 1144,857'],
          ['y', '28,980 80,972 120,962 200,953 250,947 310,943 380,947 440,955 540,956 620,952 700,949 760,949 800,940 838,934 870,917 892,898 930,872 980,841 1015,824 1080,815 1110,817 1144,830']] },
      { range: [1035, 1215], hot: [1099, 1120, 1150, 1180, 1198],
        lines: [
          ['w', '28,1124 60,1115 100,1109 140,1114 170,1128 230,1130 265,1114 300,1122 320,1119 335,1138 370,1145 395,1145 408,1158 430,1152 460,1135 490,1123 540,1112 570,1111 590,1118 640,1118 660,1115 695,1139 720,1129 760,1111 830,1105 870,1102 920,1107 990,1105 1020,1118 1060,1120 1090,1133 1120,1156 1144,1172'],
          ['y', '28,1138 60,1128 130,1113 180,1122 240,1126 310,1120 350,1131 440,1148 480,1142 530,1126 580,1116 650,1117 710,1130 780,1117 860,1107 900,1105 1000,1105 1050,1113 1085,1120 1110,1132 1144,1151'],
          ['m', '28,1090 50,1087 100,1093 120,1110 145,1117 175,1141 230,1135 262,1102 285,1123 300,1125 317,1118 332,1160 350,1168 388,1154 405,1178 425,1162 445,1138 470,1122 500,1099 520,1096 568,1097 590,1119 640,1118 658,1108 695,1165 725,1123 745,1103 770,1094 800,1093 820,1098 870,1097 900,1110 990,1104 1003,1114 1020,1138 1040,1136 1054,1123 1075,1138 1090,1148 1110,1185 1130,1203 1144,1208']] }
    ]
  },
  d3: {
    left: 9, axis: [['201910', 14], ['12', 216], ['202002', 414], ['04', 701], ['06', 935]],
    candles: 'r 458 465 518 525;c 426 450 465 466;c 456 458 492 508;c 477 482 492 502;r 458 484 492 502;r 472 477 486 508;r 441 463 473 490;c 447 462 514 516;c 504 506 514 525;r 490 493 509 530;c 495 497 531 537;r 508 513 530 534;c 508 515 537 550;r 513 518 538 549;r 488 495 514 520;r 468 470 496 500;r 417 436 468 474;c 426 434 474 480;r 440 442 473 478;r 410 412 442 460;r 369 387 400 402;r 372 378 388 407;r 357 372 377 396;c 370 371 396 400;c 376 388 406 444;c 414 420 603 672;r 530 535 593 605;r 495 499 544 555;r 454 457 500 518;r 423 427 460 476;c 405 429 441 455;c 427 462 533 533;r 429 438 517 518;c 393 420 489 492;r 438 502 506 516;c 508 585 603 648;c 577 592 627 698;r 592 600 675 690;c 583 615 627 644;r 600 602 614 644;r 569 577 607 620;c 562 570 603 610;r 566 573 593 600;c 549 561 570 588;c 549 576 586 600;r 564 571 584 618;r 525 538 566 568;r 507 521 528 540;c 516 529 542 545;r 516 530 540 545;c 522 524 576 588;r 544 560 570 574;r 498 502 560 568;r 486 495 499 515;r 477 486 490 495;c 480 489 525 540;r 484 490 510 515;r 460 468 494 500;r 455 458 466 482;r 338 340 456 460;r 150 163 316 318;r 124 137 163 188;c 128 142 228 237',
    panes: [
      { range: [54, 741], candles: true, grid: [166, 307, 448, 589],
        lines: [
          ['w', '19,478 75,484 140,477 180,487 220,510 270,520 310,490 350,465 380,430 430,390 450,388 465,420 485,450 500,480 520,498 540,503 560,478 585,465 600,458 620,465 640,490 680,550 720,608 740,606 780,594 830,580 860,560 905,540 950,543 1000,518 1040,498 1065,488 1082,460 1100,400 1115,320 1135,265'],
          ['y', '19,475 50,468 90,474 150,478 200,490 250,504 290,508 340,494 380,460 410,440 450,419 490,438 545,444 590,465 630,482 680,510 720,545 760,570 810,596 840,592 880,570 930,552 980,540 1020,526 1062,507 1082,490 1100,450 1115,410 1135,378'],
          ['m', '19,506 80,502 160,485 260,484 290,490 340,490 390,478 450,460 480,470 545,468 590,455 630,453 660,462 710,488 750,510 780,528 810,545 860,542 910,556 960,565 1000,564 1040,553 1070,540 1100,510 1135,463'],
          ['n', '19,496 60,484 150,469 240,469 300,476 380,486 450,488 510,491 580,486 660,486 730,496 820,503 900,500 990,504 1075,504 1100,498 1135,487'],
          ['b', '19,550 100,556 180,563 250,567 310,564 380,556 460,552 510,549 560,545 650,541 760,534 830,528 900,524 980,518 1040,510 1090,502 1135,487']],
        marks: [['3458.79', 944, 125, 1085, 1117], ['2646.80', 494, 698, 634, 667]] },
      { range: [744, 1032], zero: 955, hot: [955],
        bars: [944,940,948,951,953,955,951,957,961,963,972,973,975,973,968,950,945,942,937,925,915,909,905,911,921,972,991,993,981,966,963,978,967,969,974,999,1017,1021,1023,1017,1002,997,981,969,963,957,945,933,930,924,933,936,924,917,911,921,918,915,912,885,831,798,807],
        lines: [
          ['w', '19,941 37,937 90,943 130,940 165,948 200,960 250,967 290,958 310,948 345,938 380,920 415,905 450,905 470,935 490,947 510,953 545,946 560,944 577,955 600,948 630,958 665,995 705,1018 760,1021 790,1014 830,1010 870,991 900,980 940,979 985,957 1020,949 1062,932 1082,910 1100,860 1117,829 1135,818'],
          ['y', '19,950 50,943 130,941 190,949 260,957 330,955 370,946 410,931 440,923 475,923 510,935 560,941 620,945 660,955 690,972 720,990 760,1000 820,1006 860,1005 890,997 950,989 985,979 1030,969 1070,955 1082,948 1100,930 1117,909 1135,893']] },
      { range: [1035, 1215], hot: [1096, 1120, 1156, 1192, 1213],
        lines: [
          ['w', '19,1145 70,1161 100,1163 127,1155 145,1171 170,1180 200,1187 240,1192 280,1177 305,1146 325,1147 365,1122 415,1111 450,1127 475,1150 510,1153 560,1138 600,1134 620,1140 650,1160 680,1170 720,1177 770,1174 810,1155 860,1125 900,1123 930,1142 960,1126 990,1117 1010,1128 1062,1112 1100,1106 1135,1106'],
          ['y', '19,1138 50,1144 110,1158 140,1157 180,1170 230,1184 270,1187 310,1163 370,1140 430,1120 460,1124 490,1137 520,1142 600,1137 640,1143 680,1161 720,1170 770,1172 830,1151 870,1134 920,1131 950,1132 1000,1124 1060,1118 1135,1108'],
          ['m', '19,1162 37,1155 70,1186 95,1180 127,1150 145,1186 163,1204 180,1193 200,1207 235,1207 270,1180 290,1130 307,1105 325,1118 343,1107 361,1087 410,1088 430,1105 445,1120 468,1178 487,1184 520,1160 545,1130 560,1126 577,1150 600,1130 620,1140 650,1188 675,1199 700,1200 740,1180 760,1180 790,1145 815,1120 850,1090 865,1090 883,1108 903,1112 919,1150 937,1157 960,1115 990,1099 1010,1130 1040,1107 1080,1091 1117,1094 1135,1113']] }
    ]
  },
  week: {
    left: 15, axis: [['201905', 20], ['08', 239], ['11', 473], ['202002', 671], ['05', 941]],
    candles: 'c 369 381 393 414;c 457 457 491 564;c 477 514 530 536;c 504 534 551 564;r 492 517 553 567;c 504 515 570 573;r 483 530 566 573;r 438 444 533 540;c 438 444 464 488;c 411 429 442 456;c 447 447 498 516;r 478 498 502 528;r 484 487 504 534;c 471 486 543 555;c 545 548 609 636;r 558 571 602 621;r 516 520 562 570;r 504 526 552 555;r 435 447 526 535;r 424 425 432 448;c 417 417 444 477;c 442 447 498 502;c 492 498 516 516;r 459 464 516 525;c 426 450 490 492;r 470 477 494 508;c 458 472 480 508;c 438 470 474 478;c 478 480 524 526;c 508 524 528 538;c 508 527 540 550;r 504 508 536 549;r 462 469 510 517;r 417 442 466 478;r 420 441 448 477;r 378 387 455 462;r 369 381 398 408;c 357 380 396 402;c 376 387 465 480;r 530 535 647 672;r 490 505 545 555;r 405 418 500 502;c 417 425 533 534;r 393 424 518 520;c 438 457 527 591;c 516 519 627 698;r 583 607 675 690;r 600 613 631 645;c 564 582 592 600;r 549 562 598 609;c 546 558 586 588;r 541 544 582 618;r 513 520 562 568;c 508 516 543 547;c 516 537 577 585;r 545 550 578 588;r 486 493 536 540;c 477 486 503 540;r 465 468 513 520;r 458 460 470 480;r 338 340 466 468;r 124 178 316 318;c 124 181 228 237',
    panes: [
      { range: [54, 741], candles: true, grid: [166, 307, 448, 589],
        lines: [
          ['w', '25,324 50,385 65,425 80,470 100,500 120,538 135,540 160,520 185,490 205,475 222,468 240,475 260,495 280,520 295,543 330,553 350,535 385,475 410,467 445,465 470,484 515,478 545,500 580,514 605,514 625,490 650,465 690,410 710,415 745,462 765,463 785,488 820,482 850,536 870,560 890,592 905,598 930,590 960,562 1000,550 1035,536 1060,530 1085,505 1105,460 1120,410 1141,333'],
          ['y', '25,374 60,380 90,405 130,452 170,488 200,500 220,507 250,502 310,508 340,515 400,507 450,492 480,480 515,472 540,488 570,498 610,498 640,490 690,464 730,460 765,446 800,450 840,480 890,538 920,545 960,570 1000,576 1040,563 1075,544 1100,510 1120,468 1141,432'],
          ['m', '25,553 60,525 90,503 130,475 170,450 195,440 220,438 260,447 290,464 330,490 365,503 420,505 500,492 560,498 620,490 690,467 740,474 800,469 830,478 870,496 920,502 980,518 1040,536 1085,533 1115,518 1141,495'],
          ['n', '25,535 80,550 140,559 240,565 290,580 350,580 380,574 460,566 530,556 590,548 630,537 680,533 730,516 800,497 850,486 920,482 990,486 1070,500 1100,503 1141,490'],
          ['b', '25,400 130,408 240,416 330,430 430,434 520,439 600,446 690,458 780,470 840,480 920,491 1000,505 1060,515 1141,517']],
        marks: [['3458.79', 968, 125, 1108, 1140], ['2646.80', 661, 698, 802, 835]] },
      { range: [744, 1038], zero: 955, hot: [955],
        bars: [851,909,957,993,1008,1029,1029,1008,996,984,987,993,990,999,1020,1023,1008,996,970,951,943,948,956,956,957,956,957,956,962,972,978,975,962,950,941,930,912,912,930,956,972,958,974,962,975,1008,1023,1029,1020,1005,1000,983,966,958,960,956,940,931,918,909,876,822,804],
        lines: [
          ['w', '25,797 60,838 95,876 115,900 135,910 185,905 215,914 245,921 280,947 300,958 335,960 360,943 385,929 420,935 510,935 540,948 580,958 620,943 650,928 690,908 712,915 727,932 745,937 765,931 785,943 805,938 835,972 870,998 890,1006 940,1004 965,993 1010,992 1050,975 1085,955 1105,925 1123,880 1141,855'],
          ['y', '25,848 45,841 80,845 130,870 190,888 250,903 290,920 330,937 360,940 400,937 510,937 560,945 620,947 670,937 710,926 790,930 830,944 870,966 910,979 940,988 1010,991 1060,986 1090,976 1120,958 1141,930']] },
      { range: [1041, 1215], hot: [1102, 1120, 1147, 1174, 1192],
        lines: [
          ['w', '25,1135 50,1155 80,1168 115,1180 135,1180 170,1160 190,1148 240,1149 280,1166 320,1160 350,1143 370,1128 395,1125 440,1133 500,1140 530,1160 565,1173 590,1168 620,1146 665,1123 690,1120 720,1137 760,1138 790,1138 820,1140 855,1158 940,1157 980,1138 1010,1138 1060,1120 1100,1109 1141,1114'],
          ['y', '25,1120 70,1145 115,1166 165,1172 220,1153 330,1160 370,1145 420,1133 510,1139 560,1160 590,1166 640,1148 690,1130 810,1136 860,1152 940,1156 1000,1146 1050,1134 1100,1122 1141,1113'],
          ['m', '25,1158 60,1198 80,1207 115,1207 135,1198 165,1160 187,1120 210,1134 240,1138 277,1180 295,1178 310,1160 330,1155 350,1110 367,1094 387,1094 420,1130 440,1123 490,1152 511,1153 530,1188 550,1198 565,1200 585,1183 620,1122 655,1095 673,1090 691,1100 727,1150 745,1150 763,1133 781,1145 799,1130 835,1168 860,1177 885,1177 910,1163 930,1163 950,1150 979,1117 1015,1124 1033,1105 1050,1108 1085,1093 1110,1094 1141,1114']] }
    ]
  },
  day: {
    left: 60, axis: [['202001', 66], ['02', 320], ['03', 680], ['04', 1076], ['05', 1454], ['06', 1778], ['07', 2138]],
    candles: 'c 457 463 471 475;r 446 470 483 485;r 449 450 468 474;c 456 458 486 490;r 454 458 473 474;c 450 452 464 470;r 439 441 461 474;c 430 435 448 450;c 450 452 466 470;c 457 459 480 482;c 462 468 477 486;r 459 460 471 486;c 468 470 496 498;r 488 491 511 540;c 501 508 565 581;r 747 765 794 796;r 731 734 820 820;r 680 703 726 740;r 651 660 694 712;r 650 651 668 688;r 636 640 667 676;r 618 626 634 650;r 605 606 638 640;c 600 605 628 630;r 608 615 632 632;r 557 558 610 612;r 552 554 560 590;c 543 559 565 570;r 514 515 559 560;r 489 506 524 528;r 506 513 518 535;r 530 532 560 594;r 518 555 558 570;c 536 548 560 562;c 588 608 650 650;r 568 568 632 632;c 517 534 549 565;r 530 532 559 570;r 477 478 510 522;c 494 507 514 516;c 550 552 594 597;r 543 544 615 628;c 531 541 569 570;c 592 598 611 628;r 620 643 716 722;c 632 633 730 732;c 692 722 738 796;c 703 724 783 784;c 774 790 807 856;r 765 768 783 806;c 804 828 843 846;r 786 788 806 838;r 726 734 740 758;r 729 748 755 758;c 714 724 743 748;r 754 764 768 790;c 743 747 764 768;c 741 767 778 780;r 735 738 792 792;c 736 741 753 757;r 699 700 716 718;r 699 705 714 722;r 690 696 700 710;c 686 693 724 726;c 726 733 737 742;r 693 694 724 728;c 690 693 710 714;r 697 702 720 722;r 672 686 692 695;r 672 672 683 690;c 682 683 696 712;r 678 680 706 712;c 670 674 685 692;c 684 686 714 716;r 694 704 710 718;c 696 702 711 758;r 693 700 718 720;r 662 666 692 692;r 648 649 690 694;c 646 650 662 664;r 626 634 646 650;c 618 628 634 642;c 630 632 640 658;r 632 633 654 658;c 640 642 657 658;c 640 646 660 662;r 640 652 656 660;r 632 633 640 652;c 633 634 648 652;c 636 640 662 665;c 660 662 706 712;r 698 704 708 718;r 676 677 695 698;c 678 678 686 692;r 665 676 690 700;r 670 670 688 694;r 614 616 655 657;r 606 612 620 625;c 592 602 610 612;c 600 602 616 618;r 602 604 612 624;c 586 594 598 600;r 580 580 598 600;c 585 586 596 600;c 584 594 614 618;r 606 614 654 656;c 612 622 642 642;r 602 604 618 625;r 598 600 606 612;r 592 595 602 612;r 566 572 598 600;c 556 571 574 580;r 566 570 578 584;r 557 561 567 572;c 562 565 578 586;r 552 555 572 574;r 518 521 548 550;r 460 461 521 522;r 406 407 451 452;r 244 247 377 378;c 183 206 238 247;r 172 186 246 256;r 140 147 186 195;c 160 171 206 214;r 137 151 209 218;c 142 156 178 222;c 159 168 224 240;c 213 228 267 281',
    panes: [
      { range: [71, 897], candles: true, grid: [188, 365, 544, 720],
        levels: [[144, '3451.03', 144], [288, '3286.85', 241]],
        lines: [
          ['w', '70,496 110,471 210,456 290,466 322,490 340,560 360,615 380,660 412,702 440,665 465,640 500,625 520,610 570,570 600,535 645,524 662,530 680,560 715,574 745,565 775,529 825,534 845,555 880,600 910,660 935,735 965,777 990,797 1025,776 1070,753 1110,762 1140,755 1190,712 1275,712 1315,690 1365,683 1435,702 1485,686 1525,646 1565,638 1645,647 1685,655 1715,675 1765,690 1795,675 1830,645 1885,608 1925,598 1960,598 2010,615 2065,585 2145,565 2170,545 2195,500 2215,430 2235,350 2255,270 2275,220 2320,172 2340,182 2356,206'],
          ['y', '70,525 110,510 150,488 215,463 290,465 322,475 360,540 410,600 460,642 503,663 540,620 600,573 660,548 750,545 860,560 890,590 930,645 990,730 1045,770 1110,772 1150,755 1180,742 1230,735 1290,712 1365,694 1465,692 1515,680 1565,660 1615,648 1705,650 1775,672 1855,660 1905,632 1955,608 2030,602 2110,596 2155,575 2195,540 2235,460 2275,375 2320,270 2356,228'],
          ['m', '70,553 140,520 200,502 260,493 322,482 370,510 430,542 490,562 540,580 600,591 690,606 750,577 830,554 870,558 920,590 990,640 1060,670 1130,720 1180,742 1230,752 1290,742 1340,720 1445,706 1555,683 1665,665 1765,665 1835,655 1935,642 2035,631 2085,611 2175,585 2235,530 2285,475 2320,430 2356,390'],
          ['n', '70,583 180,575 320,562 390,570 510,576 620,565 740,555 800,548 880,548 950,565 1060,588 1160,610 1290,640 1400,663 1535,661 1675,672 1795,688 1885,692 2005,685 2085,668 2175,650 2235,628 2295,592 2356,566'],
          ['b', '70,600 250,587 400,589 500,583 620,575 780,569 870,574 960,586 1100,594 1290,606 1530,618 1675,621 1950,622 2150,623 2255,615 2356,600']],
        marks: [['3458.79', 2128, 138, 2265, 2300], ['2646.80', 761, 854, 900, 933]] },
      { range: [900, 1105], base: 1096, grid: [984],
        volumes: [1037,1025,1031,1032,1042,1050,1052,1044,1050,1050,1050,1048,1046,1044,1037,1045,1015,1030,1025,1029,1031,1036,1040,1035,1040,1025,1025,1025,1020,1015,1014,998,992,1010,1007,1014,1003,1018,998,1014,1003,1010,1017,1028,1018,1017,1028,1030,1028,1040,1040,1042,1036,1045,1040,1043,1048,1048,1050,1049,1038,1043,1043,1045,1056,1052,1050,1053,1044,1050,1047,1048,1040,1045,1052,1040,1053,1043,1041,1047,1047,1047,1054,1058,1052,1052,1046,1055,1052,1052,1052,1060,1058,1055,1056,1056,1041,1041,1041,1044,1047,1046,1053,1048,1047,1042,1042,1049,1047,1041,1038,1037,1045,1049,1047,1048,1035,1009,995,952,949,964,958,972,972,975,987,1040],
        lines: [
          ['w', '70,1041 130,1032 190,1043 260,1052 340,1045 400,1030 440,1027 500,1038 560,1036 600,1025 650,1007 760,1008 820,1010 900,1025 980,1040 1080,1045 1150,1046 1290,1050 1420,1046 1520,1048 1640,1050 1740,1056 1830,1045 2000,1046 2150,1046 2175,1042 2205,1020 2245,980 2285,958 2330,968 2356,990'],
          ['y', '70,1048 150,1038 220,1042 300,1050 400,1040 480,1032 560,1033 700,1012 800,1008 900,1018 1000,1030 1120,1043 1290,1050 1560,1048 1740,1055 1960,1046 2150,1044 2200,1035 2265,1008 2325,978 2340,972 2356,976']] },
      { range: [1108, 1454], zero: 1342, hot: [1342],
        bars: [1315,1314,1316,1324,1327,1329,1329,1332,1338,1343,1348,1348,1358,1361,1378,1426,1445,1445,1434,1420,1403,1386,1369,1361,1348,1335,1321,1318,1304,1295,1295,1301,1310,1315,1340,1342,1338,1332,1318,1318,1327,1335,1341,1352,1366,1389,1404,1416,1426,1426,1423,1412,1389,1372,1361,1352,1346,1343,1335,1329,1315,1307,1301,1304,1310,1307,1307,1307,1307,1304,1310,1310,1312,1321,1327,1332,1332,1327,1324,1321,1315,1315,1318,1315,1329,1332,1335,1335,1338,1341,1352,1357,1357,1357,1355,1352,1340,1333,1327,1327,1324,1324,1324,1323,1329,1335,1343,1343,1341,1341,1338,1335,1335,1332,1338,1335,1329,1315,1298,1258,1238,1221,1210,1226,1230,1247,1275,1307],
        lines: [
          ['w', '70,1293 120,1288 200,1286 230,1290 270,1298 300,1307 322,1322 340,1360 360,1385 390,1400 440,1402 500,1388 550,1365 610,1334 660,1330 685,1344 730,1340 765,1326 820,1333 850,1345 880,1375 930,1415 970,1436 990,1438 1030,1429 1060,1422 1110,1418 1140,1405 1185,1382 1230,1370 1290,1360 1320,1348 1365,1342 1410,1346 1450,1343 1500,1327 1565,1317 1655,1321 1690,1330 1720,1337 1780,1340 1830,1326 1880,1315 1930,1308 1990,1314 2070,1310 2150,1303 2180,1290 2195,1275 2212,1245 2240,1213 2270,1176 2320,1154 2340,1161 2356,1171'],
          ['y', '70,1308 130,1298 220,1290 300,1294 322,1302 370,1335 430,1373 490,1383 550,1380 620,1358 680,1344 760,1340 830,1332 880,1342 940,1380 1000,1410 1080,1418 1150,1414 1210,1395 1290,1377 1340,1363 1430,1350 1500,1342 1590,1327 1670,1325 1790,1333 1850,1329 1930,1318 2030,1316 2150,1309 2195,1297 2240,1270 2280,1235 2320,1205 2345,1192 2356,1190']] }
    ]
  },
  d10: {
    left: 9, axis: [['201801', 14], ['07', 233], ['201901', 414], ['06', 629], ['12', 845], ['202005', 1007]],
    candles: 'c 302 304 332 346;r 240 245 330 338;r 162 163 245 260;c 137 157 275 277;c 238 244 323 466;r 296 311 338 364;c 308 318 403 449;r 366 392 425 446;c 383 384 459 480;r 388 396 453 474;c 366 391 422 434;c 412 422 473 483;c 453 472 605 628;c 594 601 613 699;r 560 564 644 662;c 558 559 645 699;c 628 648 673 724;r 633 660 672 699;c 663 665 692 730;r 612 678 693 697;c 707 727 755 850;r 702 728 792 806;c 690 714 724 760;c 713 717 722 784;c 722 736 787 788;c 780 790 809 855;r 755 757 800 810;r 740 743 758 780;r 626 626 744 746;r 423 524 606 608;r 427 438 524 526;r 324 351 467 512;c 330 352 372 412;c 358 372 599 600;c 532 578 599 608;c 545 598 614 616;r 498 503 610 616;r 474 496 502 515;c 505 506 552 578;c 522 548 588 600;c 588 593 616 672;r 558 575 607 614;r 477 486 576 580;c 485 487 568 568;r 486 543 565 573;r 514 521 545 550;c 497 516 562 580;c 545 562 585 594;r 516 516 587 596;r 478 479 517 530;r 423 438 482 490;c 436 440 619 705;r 513 520 613 628;r 466 498 520 584;c 457 480 676 686;r 625 671 681 727;r 612 617 681 682;r 586 592 608 656;r 560 567 610 614;r 550 555 570 630;r 532 546 585 588;r 446 447 548 552;r 216 308 439 440',
    panes: [
      { range: [71, 897], candles: true, grid: [129, 254, 379, 504, 629, 754],
        lines: [
          ['w', '19,290 37,280 55,265 108,263 130,295 165,376 215,425 240,480 275,545 305,610 345,640 400,700 435,720 460,750 500,762 525,745 545,690 570,580 595,470 612,457 640,480 685,558 735,552 765,568 820,566 850,534 865,560 920,515 937,528 975,510 1000,570 1010,595 1040,600 1063,624 1100,580 1117,550 1135,485'],
          ['y', '19,288 60,265 90,266 120,280 160,315 200,340 215,357 240,410 275,467 310,520 345,578 370,610 400,660 435,686 470,720 505,738 545,710 580,650 597,612 640,580 680,520 705,504 730,515 780,562 830,555 870,552 920,528 975,527 1010,556 1063,570 1100,585 1120,565 1135,548'],
          ['m', '19,344 75,320 130,305 180,307 215,318 250,350 275,370 310,410 370,475 400,512 435,560 470,607 510,645 545,660 580,655 600,643 650,643 700,620 760,598 800,580 830,553 870,538 920,525 955,548 1030,552 1080,562 1135,542'],
          ['n', '19,391 55,396 140,393 190,405 240,418 360,422 430,434 490,450 540,458 600,456 640,463 700,469 760,480 830,488 900,498 980,512 1030,530 1100,548 1135,552'],
          ['b', '19,578 70,561 140,540 250,510 330,494 430,482 500,470 550,460 590,444 650,430 720,414 810,400 860,400 960,408 1010,430 1060,456 1090,468 1135,475']],
        marks: [['3587.03', 112, 138, 108, 76], ['2440.91', 296, 854, 435, 468]] },
      { range: [900, 1105], base: 1096, grid: [958],
        volumes: [1061,1048,1038,1034,1049,1049,1048,1056,1058,1060,1060,1062,1062,1060,1061,1062,1062,1068,1068,1064,1054,1048,1040,1053,1065,1060,1052,1056,1032,961,987,987,1003,1025,1033,1042,1037,1041,1054,1057,1055,1049,1035,1048,1058,1058,1058,1060,1058,1038,1025,1032,1018,990,997,1030,1038,1035,1040,1040,1036,1022,950],
        lines: [
          ['w', '19,1053 70,1045 130,1045 200,1055 300,1060 370,1064 440,1052 520,1056 540,1040 570,1010 612,992 650,1020 700,1042 760,1052 830,1048 870,1057 920,1045 955,1033 985,1012 1040,1018 1080,1033 1110,1037 1135,1018'],
          ['y', '19,1046 100,1049 200,1050 280,1058 370,1063 450,1058 520,1057 545,1042 590,1026 700,1016 730,1030 790,1045 870,1056 955,1045 990,1030 1060,1023 1110,1024 1135,1018']] },
      { range: [1108, 1454], zero: 1305, hot: [1305],
        bars: [1305,1300,1285,1296,1307,1318,1337,1349,1366,1362,1362,1370,1391,1403,1397,1400,1402,1395,1392,1382,1381,1370,1360,1346,1343,1343,1328,1315,1283,1244,1207,1170,1159,1196,1223,1247,1244,1247,1258,1275,1292,1295,1284,1291,1291,1291,1297,1302,1303,1289,1275,1301,1301,1295,1323,1341,1341,1332,1320,1309,1306,1287,1250],
        lines: [
          ['w', '19,1258 40,1255 55,1245 75,1249 110,1264 145,1292 170,1310 215,1330 240,1357 280,1385 345,1424 400,1442 435,1439 470,1447 500,1440 520,1420 550,1375 580,1320 595,1300 650,1313 690,1296 735,1301 780,1300 830,1297 870,1302 920,1281 937,1294 975,1290 1010,1320 1040,1323 1100,1313 1120,1300 1135,1275'],
          ['y', '19,1260 90,1254 120,1257 170,1275 220,1300 260,1325 310,1362 370,1397 440,1420 480,1432 510,1434 545,1423 595,1372 640,1347 700,1325 780,1313 870,1304 920,1298 975,1293 1010,1298 1060,1310 1110,1312 1135,1301']] }
    ]
  }
};

const today = {
  range: [71, 1454],
  prices: [[121, '3423.62', '+1.85%'], [212, '3411.16', '+1.48%'], [303, '3398.69', '+1.11%'], [394, '3386.23', '+0.74%'], [488, '3373.77', '+0.37%'], [577, '3361.30', '+0.00%'], [669, '3348.84', '-0.37%'], [763, '3336.38', '-0.74%'], [854, '3323.92', '-1.11%'], [945, '3311.45', '-1.48%']],
  volumes: [[1089, '9139561', '+100%'], [1180, '6854671', '+75%'], [1271, '4569780', '+50%'], [1362, '2284890', '+25%']],
  split: 1036,
  times: ['09:30', '10:00', '10:30', '11:00', '11:30', '13:30', '14:00', '14:30', '15:00'],
  // plot starts at 200 and ends at 1097
  line: '200,612 205,600 208,640 211,720 214,640 218,660 223,740 227,680 229,722 233,685 236,695 241,615 246,575 250,530 254,505 260,495 266,495 269,555 272,518 276,530 280,565 284,545 288,600 292,625 296,615 301,655 305,612 313,665 317,610 320,585 325,605 330,615 335,660 340,695 346,728 350,690 356,720 361,700 366,720 368,708 375,770 377,805 381,780 388,828 392,805 397,820 404,828 408,880 412,908 418,915 422,955 428,850 434,818 440,798 444,815 450,830 455,870 463,890 469,942 473,900 478,850 485,820 490,832 495,825 501,785 508,800 512,832 520,790 527,782 532,772 538,825 545,800 550,830 555,862 560,870 575,875 582,938 590,890 595,930 600,985 607,985 614,1035 620,1000 626,955 635,938 643,913 650,925',
  bars: [1287,1094,1200,1192,1210,1240,1227,1268,1245,1290,1290,1320,1320,1310,1308,1305,1287,1310,1320,1325,1335,1325,1340,1340,1340,1338,1345,1362,1345,1320,1350,1348,1360,1372,1372,1340,1345,1372,1388,1388,1380,1375,1345,1350,1348,1370,1385,1390,1372,1390,1385,1365,1352,1343,1378,1385,1355,1375,1390,1398,1390,1365,1352,1380,1375,1360,1350,1346,1375,1390,1400,1398,1410,1415,1408,1400,1408,1415,1412,1390,1398,1410,1400,1395,1405,1420,1425,1415,1398,1415,1405,1420,1418,1415,1420,1418,1418,1415,1425,1420,1418,1418,1425,1425,1432,1405,1392,1400,1410,1415,1392,1410,1405,1408,1382,1400,1378,1400,1420,1425,1425,1428,1428]
};

function drawToday() {
  const panel = document.getElementById('today');
  const svg = panel.querySelector('.plot'), axis = panel.querySelector('.axis');
  svg.replaceChildren(); axis.replaceChildren();
  const width = svg.clientWidth, height = svg.clientHeight;
  const [from, to] = today.range;
  const Y = v => Math.round((v - from) * height / (to - from));
  const x0 = 61, x1 = width - 51;
  const X = v => Math.round(x0 + (v - 200) * (x1 - x0) / 897);

  [...today.prices, ...today.volumes].forEach(([v, left, right], i) => {
    hline(svg, Y(v), 'grid-solid', x0, x1);
    if (i === 5) hline(svg, Y(v) + 1, 'grid-solid', x0, x1);
    const tone = i > 9 ? 't-y' : i < 5 ? 't-up' : i > 5 ? 't-dn' : '';
    add(svg, 'text', { x: x0 - 2, y: Y(v) + 6, class: tone + ' end' }, left);
    add(svg, 'text', { x: x1 + 2, y: Y(v) + 6, class: tone }, right);
  });
  today.times.forEach((t, i) => {
    const x = Math.round(x0 + i * (x1 - x0) / 8), edge = i === 0 || i === 8;
    vline(svg, x, edge ? 0 : Y(121), height, edge ? 'frame' : i % 2 ? 'grid' : 'grid-solid');
    if (i < 8) add(axis, 'text', { x, y: 11, class: 'mid' }, t);
  });
  hline(svg, Y(today.split), 'frame', 0);
  hline(svg, Y(today.split) + 1, 'frame', 0);
  vline(svg, 0, Y(today.split), height, 'frame');
  vline(svg, x0 - 1, Y(today.split), height, 'frame');
  add(svg, 'text', { x: x0 + 2, y: Y(today.split) + 15, class: 't-zh' }, '成交量');
  today.bars.forEach((v, i) => {
    add(svg, 'rect', { x: x0 + 1 + Math.round(i * 149 / today.bars.length), y: Y(v), width: 1, height: Y(1453) - Y(v), class: 'vbar' });
  });
  const points = today.line.split(' ').map(p => { const [x, v] = p.split(','); return (X(+x) + .5) + ',' + (Y(v) + .5); });
  add(svg, 'polyline', { points: points.join(' '), class: 's-w' });
}

function draw() {
  for (const id in charts) {
    const chart = charts[id], panel = document.getElementById(id);
    const candles = parseCandles(chart.candles);
    panel.querySelectorAll('.plot').forEach((svg, i) => drawPane(svg, chart.panes[i], chart.left, candles));
    const axis = panel.querySelector('.axis');
    axis.replaceChildren();
    chart.axis.forEach(([label, x]) => add(axis, 'text', { x: Math.round((x - chart.left) / 3), y: 11 }, label));
  }
  drawToday();
}
draw();
window.addEventListener('resize', draw);
```
